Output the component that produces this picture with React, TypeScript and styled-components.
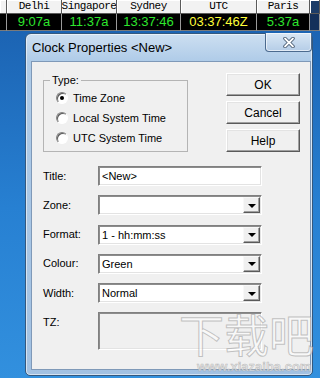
import React from "react";
import styled, { createGlobalStyle } from "styled-components";

const GlobalStyle = createGlobalStyle`
  html, body {
    margin: 0;
    padding: 0;
  }
  body {
    width: 320px;
    height: 378px;
    overflow: hidden;
    font-family: "Liberation Sans", Arial, sans-serif;
  }
`;

const Page = styled.div`
  position: relative;
  width: 320px;
  height: 378px;
  overflow: hidden;
  display: flex;
  flex-direction: column;
  background: linear-gradient(180deg, #1a5fae 0%, #2780d2 55%, #3290de 100%);
`;

const ClockBar = styled.div`
  display: grid;
  grid-template-columns: 7px 55px 55px 64px 76px 53px 1fr;
  grid-template-rows: 14px 17px;
`;

const HeaderCell = styled.div<{ $rest?: boolean }>`
  display: flex;
  justify-content: center;
  overflow: hidden;
  white-space: nowrap;
  background: ${(p) => (p.$rest ? "#1c3c68" : "#f2f2f2")};
  border-right: 1px solid #5a5a5a;
  border-bottom: 1px solid #5a5a5a;
  box-shadow: inset 1px 1px #ffffff;
  font-family: "Liberation Mono", "DejaVu Sans Mono", monospace;
  font-size: 11px;
  letter-spacing: -0.5px;
  line-height: 13px;
  color: #000;
`;

const TimeCell = styled.div<{ $color?: string; $rest?: boolean }>`
  display: flex;
  justify-content: center;
  overflow: hidden;
  white-space: nowrap;
  background: ${(p) => (p.$rest ? "#14305a" : "#000")};
  border-right: 1px solid #9a9a9a;
  border-bottom: 1px solid #7a7a7a;
  color: ${(p) => p.$color || "#2ee62e"};
  font-size: 13px;
  line-height: 16px;
`;

const Desktop = styled.div`
  flex: 1;
  display: flex;
  padding: 2px 7px 2px 25px;
`;

const Window = styled.div`
  width: 288px;
  height: 343px;
  box-sizing: border-box;
  display: flex;
  flex-direction: column;
  padding: 0 1px 5px 5px;
  border: 1px solid #34587e;
  border-radius: 6px 6px 5px 5px;
  background: linear-gradient(180deg, #cddff1 0%, #aecbe8 28px, #a2c1e2 100%);
  box-shadow: inset 0 0 0 1px rgba(255, 255, 255, 0.55);
`;

const TitleBar = styled.div`
  height: 27px;
  display: flex;
  align-items: flex-start;
  padding-left: 1px;
`;

const TitleText = styled.div`
  margin-top: 6px;
  font-size: 13px;
  line-height: 15px;
  color: #000;
`;

const CloseButton = styled.div`
  margin-left: auto;
  margin-top: -1px;
  margin-right: -1px;
  width: 47px;
  height: 19px;
  box-sizing: border-box;
  display: flex;
  align-items: center;
  justify-content: center;
  border: 1px solid #4b6a8e;
  border-top: none;
  border-radius: 0 0 4px 4px;
  background: linear-gradient(180deg, #d9e7f5 0%, #b5cde7 100%);
  box-shadow: inset 0 0 0 1px rgba(255, 255, 255, 0.6);
`;

const Client = styled.div`
  flex: 1;
  display: flex;
  flex-direction: column;
  box-sizing: border-box;
  padding: 11px 10px 0 11px;
  background: #f0f0f0;
  border: 1px solid #7f99b8;
  font-size: 11px;
  color: #000;
`;

const TopSection = styled.div`
  display: flex;
  justify-content: space-between;
  align-items: flex-start;
`;

const GroupBox = styled.fieldset`
  width: 145px;
  box-sizing: border-box;
  margin: 1px 0 0 0;
  padding: 1px 0 3px 12px;
  border: 1px solid #b4b4b4;
  display: flex;
  flex-direction: column;
`;

const Legend = styled.legend`
  margin-left: -6px;
  padding: 0 2px;
  font-size: 11px;
  line-height: 13px;
`;

const RadioRow = styled.label`
  height: 20px;
  display: flex;
  align-items: center;
  gap: 5px;
`;

const Radio = styled.span<{ $checked?: boolean }>`
  width: 12px;
  height: 12px;
  box-sizing: border-box;
  border-radius: 50%;
  border: 1px solid;
  border-color: #808080 #ffffff #ffffff #808080;
  background: #fff;
  box-shadow: inset 1px 1px #5a5a5a;
  display: flex;
  align-items: center;
  justify-content: center;

  &::after {
    content: "";
    width: 4px;
    height: 4px;
    border-radius: 50%;
    background: ${(p) => (p.$checked ? "#000" : "transparent")};
  }
`;

const ButtonColumn = styled.div`
  display: flex;
  flex-direction: column;
  gap: 5px;
`;

const Button = styled.button`
  width: 74px;
  height: 23px;
  box-sizing: border-box;
  padding: 0;
  font-family: "Liberation Sans", Arial, sans-serif;
  font-size: 12px;
  color: #000;
  background: #f0f0f0;
  border: 1px solid;
  border-color: #ffffff #5a5a5a #5a5a5a #ffffff;
  box-shadow: inset -1px -1px #a0a0a0, inset 1px 1px #e3e3e3;
`;

const Fields = styled.div`
  margin-top: 14px;
  display: grid;
  grid-template-columns: 55px 164px;
  row-gap: 9.25px;
  align-items: center;
`;

const FieldLabel = styled.div<{ $top?: boolean }>`
  align-self: ${(p) => (p.$top ? "start" : "center")};
  padding-top: ${(p) => (p.$top ? "4px" : "0")};
  line-height: 13px;
`;

const Sunken = styled.div<{ $disabled?: boolean }>`
  height: 20px;
  box-sizing: border-box;
  display: flex;
  align-items: center;
  border: 1px solid;
  border-color: #808080 #ffffff #ffffff #808080;
  box-shadow: inset 1px 1px #8c8c8c, inset -1px -1px #e3e3e3;
  background: ${(p) => (p.$disabled ? "#f0f0f0" : "#ffffff")};
  padding: 1px 1px 1px 3px;
`;

const TzBox = styled(Sunken)`
  height: 38px;
`;

const FieldText = styled.span`
  flex: 1;
  white-space: nowrap;
  overflow: hidden;
`;

const DropButton = styled.span`
  width: 17px;
  align-self: stretch;
  box-sizing: border-box;
  display: flex;
  align-items: center;
  justify-content: center;
  background: #f0f0f0;
  border: 1px solid;
  border-color: #f8f8f8 #5a5a5a #5a5a5a #f8f8f8;
  box-shadow: inset -1px -1px #a0a0a0;

  &::after {
    content: "";
    border-left: 4px solid transparent;
    border-right: 4px solid transparent;
    border-top: 4px solid #000;
    margin-top: 1px;
  }
`;

const Watermark = styled.div`
  position: absolute;
  left: 179px;
  top: 311px;
  font-family: "Noto Sans CJK SC", sans-serif;
  font-size: 45px;
  line-height: 46px;
  height: 46px;
  color: rgba(255, 255, 255, 0.6);
  -webkit-text-stroke: 1px rgba(140, 140, 140, 0.5);
  pointer-events: none;
`;

const WatermarkUrl = styled.div`
  position: absolute;
  left: 197px;
  top: 360px;
  font-family: "Liberation Sans", Arial, sans-serif;
  font-weight: bold;
  font-size: 13px;
  line-height: 14px;
  color: rgba(225, 225, 225, 0.75);
  -webkit-text-stroke: 0.5px rgba(150, 150, 150, 0.6);
  pointer-events: none;
`;

const clocks = [
  { city: "", time: "" },
  { city: "Delhi", time: "9:07a" },
  { city: "Singapore", time: "11:37a" },
  { city: "Sydney", time: "13:37:46" },
  { city: "UTC", time: "03:37:46Z", color: "#ffff3a" },
  { city: "Paris", time: "5:37a" },
];

const CloseIcon = () => (
  <svg width="12" height="11" viewBox="0 0 12 11">
    <path
      d="M2 1.5 L10 9.5 M10 1.5 L2 9.5"
      stroke="#3a4e66"
      strokeWidth="3.4"
      strokeLinecap="round"
    />
    <path
      d="M2 1.5 L10 9.5 M10 1.5 L2 9.5"
      stroke="#ffffff"
      strokeWidth="1.8"
      strokeLinecap="round"
    />
  </svg>
);

const Combo: React.FC<{ value: string }> = ({ value }) => (
  <Sunken>
    <FieldText>{value}</FieldText>
    <DropButton />
  </Sunken>
);

const App: React.FC = () => {
  return (
    <Page>
      <GlobalStyle />
      <ClockBar>
        {clocks.map((c, i) => (
          <HeaderCell key={"h" + i}>{c.city}</HeaderCell>
        ))}
        <HeaderCell $rest />
        {clocks.map((c, i) => (
          <TimeCell key={"t" + i} $color={c.color}>
            {c.time}
          </TimeCell>
        ))}
        <TimeCell $rest />
      </ClockBar>

      <Desktop>
        <Window>
          <TitleBar>
            <TitleText>Clock Properties &lt;New&gt;</TitleText>
            <CloseButton>
              <CloseIcon />
            </CloseButton>
          </TitleBar>
          <Client>
            <TopSection>
              <GroupBox>
                <Legend>Type:</Legend>
                <RadioRow>
                  <Radio $checked />
                  Time Zone
                </RadioRow>
                <RadioRow>
                  <Radio />
                  Local System Time
                </RadioRow>
                <RadioRow>
                  <Radio />
                  UTC System Time
                </RadioRow>
              </GroupBox>
              <ButtonColumn>
                <Button>OK</Button>
                <Button>Cancel</Button>
                <Button>Help</Button>
              </ButtonColumn>
            </TopSection>

            <Fields>
              <FieldLabel>Title:</FieldLabel>
              <Sunken>
                <FieldText>&lt;New&gt;</FieldText>
              </Sunken>
              <FieldLabel>Zone:</FieldLabel>
              <Combo value="" />
              <FieldLabel>Format:</FieldLabel>
              <Combo value="1 - hh:mm:ss" />
              <FieldLabel>Colour:</FieldLabel>
              <Combo value="Green" />
              <FieldLabel>Width:</FieldLabel>
              <Combo value="Normal" />
              <FieldLabel $top>TZ:</FieldLabel>
              <TzBox $disabled />
            </Fields>
          </Client>
        </Window>
      </Desktop>

      <Watermark>下载吧</Watermark>
      <WatermarkUrl>www.xiazaiba.com</WatermarkUrl>
    </Page>
  );
};

export default App;
